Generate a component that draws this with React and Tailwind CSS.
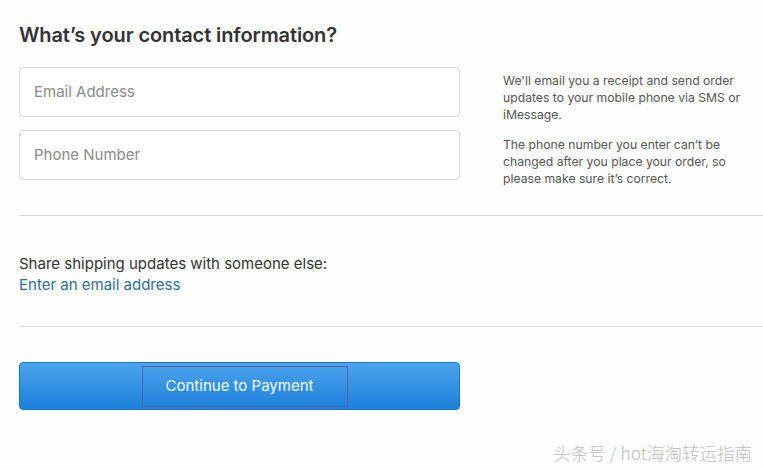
import React from 'react';

function Field({ placeholder }) {
  return (
    <div className="h-[50px] border border-[#d6d6d6] rounded-[4px] bg-white flex items-center px-[14px]">
      <span className="text-[15px] text-[#8a8a8a]">{placeholder}</span>
    </div>
  );
}

export default function App() {
  return (
    <div className="w-[763px] h-[470px] bg-[#fefefe] relative overflow-hidden font-['Inter',sans-serif]">
      <div className="pl-[19px] pt-[22px]">
        <h1 className="text-[20px] leading-[26px] font-semibold text-[#333] tracking-[-0.1px]">
          What’s your contact information?
        </h1>

        <div className="flex mt-[19px]">
          <div className="w-[441px] flex flex-col gap-[13px]">
            <Field placeholder="Email Address" />
            <Field placeholder="Phone Number" />
          </div>
          <div className="ml-[43px] w-[245px] pt-[5px] text-[12.2px] leading-[17px] text-[#555]">
            <p>We'll email you a receipt and send order updates to your mobile phone via SMS or iMessage.</p>
            <p className="mt-[13px]">The phone number you enter can’t be changed after you place your order, so please make sure it’s correct.</p>
          </div>
        </div>

        <div className="mt-[28px] border-t border-[#d9d9d9]" />

        <div className="pt-[37px] pb-[31px] text-[15px] leading-[21px]">
          <p className="text-[#333]">Share shipping updates with someone else:</p>
          <a className="text-[#2f6f95]">Enter an email address</a>
        </div>

        <div className="border-t border-[#d9d9d9]" />

        <div className="relative mt-[35px] w-[441px] h-[48px] rounded-[4px] bg-gradient-to-b from-[#4ba5ec] to-[#1b7fd9] border border-[#1e74c4] flex items-center justify-center">
          <span className="text-[15px] text-[#f4fbff]">Continue to Payment</span>
          <div className="absolute left-[122px] top-[3px] w-[206px] h-[41px] border-[1.5px] border-[#5563a6]" />
        </div>
      </div>

      <div className="absolute right-[11px] bottom-[4px] text-[17.5px] text-[#bdbdbd] font-['Noto_Sans_CJK_SC',sans-serif] font-light [text-shadow:0_0_1px_#fff]">
        头条号 / hot海淘转运指南
      </div>
    </div>
  );
}
